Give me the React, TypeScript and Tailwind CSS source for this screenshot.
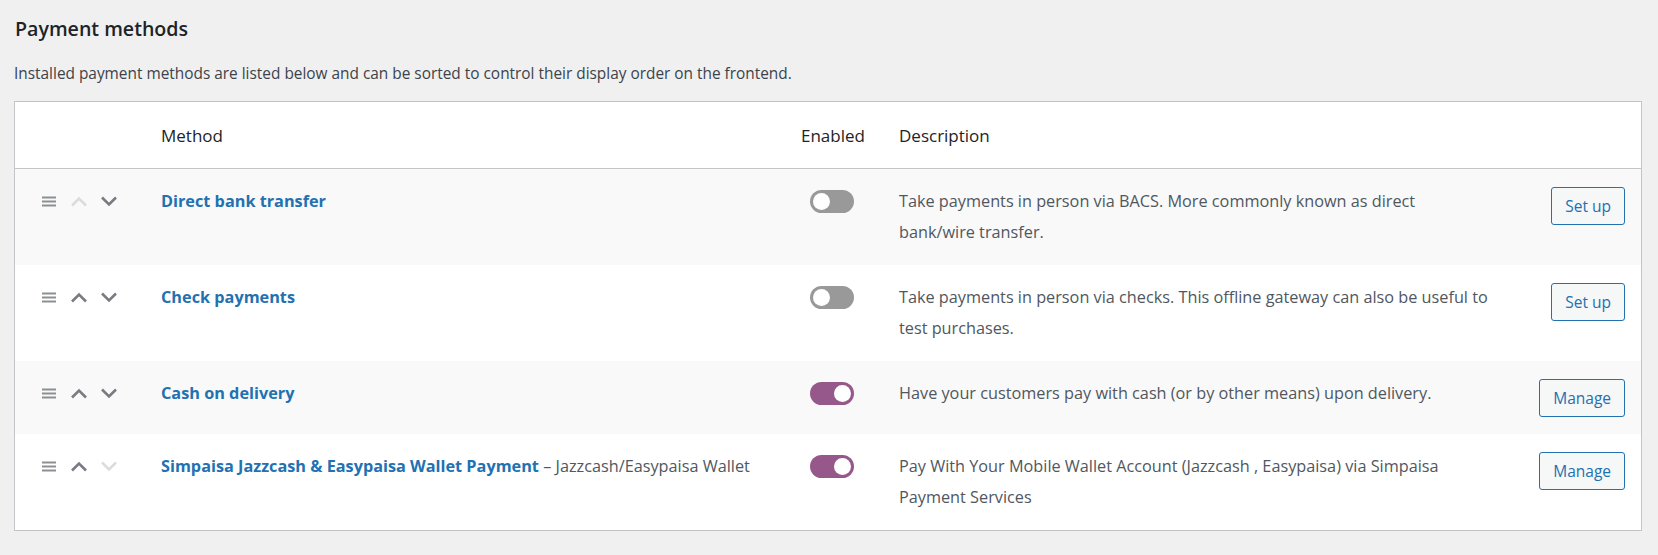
import { Fragment } from "react";

type Gateway = {
  name: string;
  suffix?: string;
  enabled: boolean;
  description: string;
  action: string;
  canUp: boolean;
  canDown: boolean;
};

const gateways: Gateway[] = [
  {
    name: "Direct bank transfer",
    enabled: false,
    description:
      "Take payments in person via BACS. More commonly known as direct bank/wire transfer.",
    action: "Set up",
    canUp: false,
    canDown: true,
  },
  {
    name: "Check payments",
    enabled: false,
    description:
      "Take payments in person via checks. This offline gateway can also be useful to test purchases.",
    action: "Set up",
    canUp: true,
    canDown: true,
  },
  {
    name: "Cash on delivery",
    enabled: true,
    description: "Have your customers pay with cash (or by other means) upon delivery.",
    action: "Manage",
    canUp: true,
    canDown: true,
  },
  {
    name: "Simpaisa Jazzcash & Easypaisa Wallet Payment",
    suffix: "Jazzcash/Easypaisa Wallet",
    enabled: true,
    description:
      "Pay With Your Mobile Wallet Account (Jazzcash , Easypaisa) via Simpaisa Payment Services",
    action: "Manage",
    canUp: true,
    canDown: false,
  },
];

const cols = "grid grid-cols-[136px_640px_98px_612px_1fr]";

function Chevron({ up, active }: { up: boolean; active: boolean }) {
  return (
    <svg width="18" height="11" viewBox="0 0 18 11" className={active ? "text-[#787c82]" : "text-[#dcdcde]"}>
      <path
        d={up ? "M2 9.5 L9 2.5 L16 9.5" : "M2 1.5 L9 8.5 L16 1.5"}
        fill="none"
        stroke="currentColor"
        strokeWidth="2.6"
      />
    </svg>
  );
}

function Toggle({ on }: { on: boolean }) {
  return (
    <div
      className={`ml-[19px] mt-[4px] flex h-[23px] w-[44px] items-center rounded-full px-[3px] ${
        on ? "justify-end bg-[#96588a]" : "justify-start bg-[#999999]"
      }`}
    >
      <div className="h-[17px] w-[17px] rounded-full bg-white" />
    </div>
  );
}

export default function App() {
  return (
    <div
      className="min-h-screen bg-[#f0f0f1] px-[14px] pt-[15px] pb-6 text-[#3c434a]"
      style={{ fontFamily: '"Open Sans", "Noto Sans", sans-serif' }}
    >
      <h2 className="pl-[1px] text-[19.6px] leading-[28px] font-semibold text-[#1d2327]">Payment methods</h2>
      <p className="mt-[21px] text-[15.4px] leading-[20px] text-[#3c434a]">
        Installed payment methods are listed below and can be sorted to control their display order on the frontend.
      </p>

      <div className="mt-[17px] w-[1628px] border border-[#c3c4c7] bg-white text-[16.25px] leading-[31px]">
        <div className={`${cols} border-b border-[#c3c4c7] pt-[18px] pb-[17px] text-[17px] text-[#1d2327]`}>
          <div />
          <div className="pl-[10px]">Method</div>
          <div className="pl-[10px]">Enabled</div>
          <div className="pl-[10px]">Description</div>
          <div />
        </div>

        {gateways.map((g, i) => (
          <div key={g.name} className={`${cols} py-[17px] ${i % 2 === 0 ? "bg-[#f9f9f9]" : "bg-white"}`}>
            <div className="flex h-[31px] items-center pl-[27px]">
              <svg width="14" height="11" viewBox="0 0 14 11" className="text-[#8c8f94]">
                <rect x="0" y="0.5" width="14" height="2" fill="currentColor" />
                <rect x="0" y="4.5" width="14" height="2" fill="currentColor" />
                <rect x="0" y="8.5" width="14" height="2" fill="currentColor" />
              </svg>
              <div className="ml-[14px]">
                <Chevron up active={g.canUp} />
              </div>
              <div className="ml-[12px]">
                <Chevron up={false} active={g.canDown} />
              </div>
            </div>
            <div className="pl-[10px]">
              <a href="#" className="font-bold text-[#2271b1]">
                {g.name}
              </a>
              {g.suffix && (
                <Fragment>
                  <span className="text-[#50575e]"> – {g.suffix}</span>
                </Fragment>
              )}
            </div>
            <div>
              <Toggle on={g.enabled} />
            </div>
            <div className="px-[10px] text-[#50575e]">{g.description}</div>
            <div className="flex items-start justify-end pr-[16px] pt-[1px]">
              <button className="h-[38px] rounded-[3px] border border-[#2271b1] bg-[#f6f7f7] px-[13px] text-[15.5px] leading-[36px] text-[#2271b1]">
                {g.action}
              </button>
            </div>
          </div>
        ))}
      </div>
    </div>
  );
}
